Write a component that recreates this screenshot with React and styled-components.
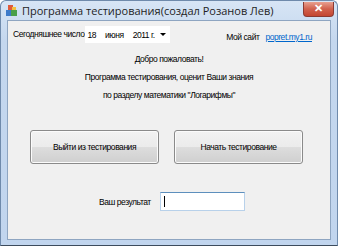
import React from 'react';
import styled, { createGlobalStyle } from 'styled-components';

const GlobalStyle = createGlobalStyle`
  html, body {
    margin: 0;
    padding: 0;
    width: 338px;
    height: 246px;
    overflow: hidden;
    background: #ffffff;
  }
`;

// window chrome
const Window = styled.div`
  width: 338px;
  height: 246px;
  box-sizing: border-box;
  display: flex;
  flex-direction: column;
  background: linear-gradient(#d7e5f5, #c4d7ee 40px, #c1d5ee);
  border: 1px solid #6f8aab;
  border-bottom-color: #3d4b5c;
  border-radius: 6px 6px 0 0;
  font-family: 'Liberation Sans', Arial, sans-serif;
`;

const TitleBar = styled.div`
  height: 19px;
  display: flex;
  align-items: center;
  padding: 0 3px 0 4px;
  gap: 4px;
`;

const Title = styled.span`
  flex: 1;
  font-family: 'Open Sans', 'Liberation Sans', sans-serif;
  font-size: 11px;
  color: #1e1e1e;
`;

const CloseButton = styled.div`
  width: 31px;
  height: 15px;
  margin-top: -3px;
  display: flex;
  align-items: center;
  justify-content: center;
  border: 1px solid #8b3a32;
  border-top: none;
  border-radius: 0 0 4px 4px;
  background: linear-gradient(#e8a08f, #d1614d 50%, #c44631);
  color: #fff;
  font-size: 11px;
  font-weight: bold;
  box-sizing: border-box;
`;

const Client = styled.div`
  flex: 1;
  margin: 0 6px 5px 6px;
  border: 1px solid #8ea5c1;
  background: #f0f0f0;
  display: flex;
  flex-direction: column;
  font-size: 8.5px;
  letter-spacing: -0.45px;
  color: #000;
  white-space: nowrap;
`;

const TopRow = styled.div`
  display: flex;
  align-items: flex-start;
  padding: 5px 18px 0 5px;
`;

const Label = styled.span`
  line-height: 17px;
  margin-right: 1px;
`;

const DatePicker = styled.div`
  width: 85px;
  height: 17px;
  box-sizing: border-box;
  background: #fff;
  display: flex;
  align-items: center;
  padding: 0 0 0 2px;
  color: #000;
`;

const DatePart = styled.span`
  margin-right: ${(p) => p.gap}px;
`;

const Arrow = styled.span`
  width: 0;
  height: 0;
  margin-left: 5px;
  border-left: 3px solid transparent;
  border-right: 3px solid transparent;
  border-top: 3px solid #000;
`;

const Site = styled.div`
  margin-left: auto;
  margin-top: 6px;
  display: flex;
  gap: 6px;
`;

const Link = styled.a`
  color: #0066cc;
  text-decoration: underline;
`;

const Message = styled.div`
  display: flex;
  flex-direction: column;
  align-items: center;
  gap: 6px;
  margin-top: 10px;
  line-height: 12px;
`;

const Buttons = styled.div`
  display: flex;
  gap: 15px;
  padding-left: 22px;
  margin-top: 29px;
`;

const Button = styled.button`
  width: 129px;
  height: 34px;
  font-family: inherit;
  font-size: 8.5px;
  letter-spacing: -0.45px;
  color: #000;
  border: 1px solid #8a8a8a;
  border-radius: 3px;
  background: linear-gradient(#f2f2f2, #ebebeb 50%, #dddddd 51%, #cfcfcf);
  box-shadow: inset 0 0 0 1px #fbfbfb;
  padding: 0;
`;

const ResultRow = styled.div`
  display: flex;
  align-items: center;
  padding-left: 91px;
  margin-top: 28px;
  gap: 9px;
`;

const Input = styled.div`
  width: 85px;
  height: 19px;
  box-sizing: border-box;
  background: #fff;
  border: 1px solid #b8d1ea;
  border-top-color: #5d8fbd;
  display: flex;
  align-items: center;
  padding-left: 3px;
`;

const Caret = styled.span`
  width: 1px;
  height: 11px;
  background: #000;
`;

function AppIcon() {
  return (
    <svg width="13" height="13" viewBox="0 0 13 13">
      <rect x="1" y="6" width="5" height="6" fill="#3d7ac9" />
      <rect x="6" y="6" width="6" height="6" fill="#4aa04a" />
      <rect x="3" y="1" width="5" height="5" fill="#e05a3a" />
      <rect x="7" y="3" width="4" height="3" fill="#f0c040" />
    </svg>
  );
}

export default function App() {
  return (
    <>
      <GlobalStyle />
      <Window>
        <TitleBar>
          <AppIcon />
          <Title>Программа тестирования(создал Розанов Лев)</Title>
          <CloseButton>✕</CloseButton>
        </TitleBar>
        <Client>
          <TopRow>
            <Label>Сегодняшнее число</Label>
            <DatePicker>
              <DatePart gap={9}>18</DatePart>
              <DatePart gap={9}>июня</DatePart>
              <DatePart gap={0}>2011 г.</DatePart>
              <Arrow />
            </DatePicker>
            <Site>
              <span>Мой сайт</span>
              <Link>popret.my1.ru</Link>
            </Site>
          </TopRow>
          <Message>
            <span>Добро пожаловать!</span>
            <span>Программа тестирования, оценит Ваши знания</span>
            <span>по разделу математики "Логарифмы"</span>
          </Message>
          <Buttons>
            <Button>Выйти из тестирования</Button>
            <Button>Начать тестирование</Button>
          </Buttons>
          <ResultRow>
            <span>Ваш результат</span>
            <Input>
              <Caret />
            </Input>
          </ResultRow>
        </Client>
      </Window>
    </>
  );
}
